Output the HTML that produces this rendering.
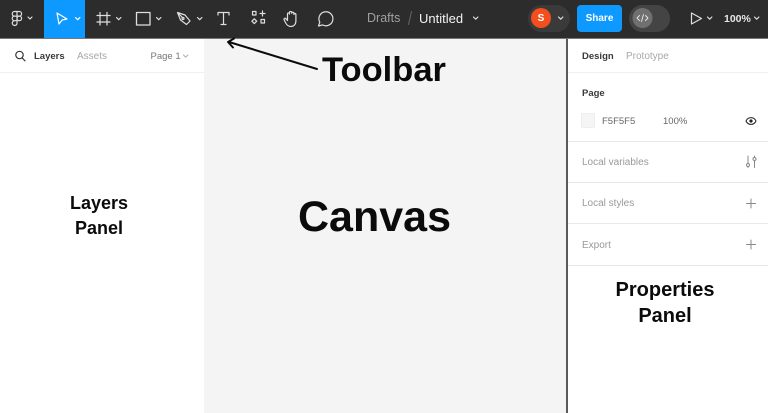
<!DOCTYPE html>
<html><head><meta charset="utf-8"><style>
html,body{margin:0;padding:0;background:#fff}
#p{position:relative;width:768px;height:413px;overflow:hidden;background:#fff;font-family:"Liberation Sans",sans-serif}
.a{position:absolute;white-space:nowrap;line-height:1}
.b{font-weight:700;color:#0b0b0b}
svg{position:absolute;left:0;top:0}
.t{font-size:9.5px;color:#3a3a3a}
.g{font-size:10px;color:#a8a8a8}
</style></head><body><div id="p">
<div class="a" style="left:0;top:0;width:768px;height:38px;background:#2c2c2c"></div>
<div class="a" style="left:0;top:38px;width:768px;height:1px;background:#777"></div>
<div class="a" style="left:44px;top:0;width:41px;height:38px;background:#0d99ff"></div>
<div class="a" style="left:204px;top:39px;width:363px;height:374px;background:#f4f4f4"></div>
<div class="a" style="left:566px;top:39px;width:2px;height:374px;background:#5a5a5a"></div>
<div class="a" style="left:0;top:72px;width:204px;height:1px;background:#efefef"></div>
<div class="a" style="left:568px;top:72px;width:200px;height:1px;background:#efefef"></div>
<div class="a" style="left:568px;top:141px;width:200px;height:1px;background:#e8e8e8"></div>
<div class="a" style="left:568px;top:182px;width:200px;height:1px;background:#e8e8e8"></div>
<div class="a" style="left:568px;top:223px;width:200px;height:1px;background:#e8e8e8"></div>
<div class="a" style="left:568px;top:265px;width:200px;height:1px;background:#e8e8e8"></div>

<svg width="768" height="413" fill="none" stroke-linecap="round" stroke-linejoin="round">
<g stroke="#dedede" stroke-width="1.200">
<path d="M17 11.500h-2.500a2.300 2.300 0 0 0 0 4.600H17zM17 11.500h2.300a2.300 2.300 0 0 1 0 4.600H17zM17 16.100h-2.500a2.300 2.300 0 0 0 0 4.600H17zM17 18.400a2.300 2.300 0 1 0 4.600 0 2.300 2.300 0 1 0-4.600 0M17 20.700v1.800a2.400 2.400 0 1 1-2.500-1.800"/>
<path d="M28 17l2 2 2-2"/>
<path d="M100 12.500v12.500M107 12.500v12.500M97 15.500h13M97 22h13"/>
<path d="M116.500 17.500l2.200 2.200 2.200-2.200"/>
<rect x="136.500" y="12.500" width="13.500" height="12.500" stroke-width="1.300"/>
<path d="M156.500 17.500l2.200 2.200 2.200-2.200"/>
<path d="M177.500 12.500l7.500 2.500 5 6-3.500 3.500-6-4.500zM177.500 12.500l5 5"/><circle cx="183" cy="18.500" r="1"/>
<path d="M197.500 17.500l2.200 2.200 2.200-2.200"/>
<path d="M218 15v-2.500h11V15M223.500 12.500v12M221 24.500h5"/>
<rect x="252.500" y="11.500" width="3.500" height="3.500"/><path d="M262.500 11v5M260 13.500h5"/><rect x="261" y="19.500" width="3.500" height="3.500"/><path d="M254.300 18.800l2.400 2.400-2.400 2.400-2.400-2.400z"/>
<path d="M291 26.500c-2.500 0-3.800-1-5-3l-1.800-3.500c-.7-1.300.8-2.300 1.800-1.200l1.500 1.700v-6.500c0-1.400 2-1.400 2 0v-1.500c0-1.400 2.200-1.400 2.200 0v.8c0-1.400 2.200-1.400 2.200 0v1.200c0-1.300 2-1.300 2 0v6.500c0 3-2 5.500-4.900 5.500z"/>
<path d="M318.500 26l1.300-3.800a7 7 0 1 1 2.700 2.700z"/>
<path d="M473.500 17l2.200 2.200 2.200-2.200"/>
<path d="M691.500 13l10 5.500-10 5.500z"/>
<path d="M707.500 17l2.200 2.200 2.200-2.200"/>
<path d="M754.500 17l2.200 2.200 2.200-2.200"/>
</g>
<path d="M57 13l10 6-4.800 1-3.200 4z" stroke="#fff" stroke-width="1.200"/>
<path d="M75.500 17.500l2.200 2.200 2.200-2.200" stroke="#fff" stroke-width="1.200"/>
<rect x="528" y="5" width="42" height="27" rx="13.500" fill="#3a3a3a"/>
<circle cx="541" cy="18" r="10" fill="#f24e1e"/>
<path d="M558.500 17l2.200 2.200 2.200-2.200" stroke="#dedede" stroke-width="1.200"/>
<rect x="629" y="5" width="41" height="27" rx="13.500" fill="#444"/>
<circle cx="642.500" cy="18" r="10" fill="#707070"/>
<path d="M639.500 15.500l-2.500 2.500 2.500 2.500M645.500 15.500l2.500 2.500-2.500 2.500M643.500 14.500l-2 7" stroke="#e8e8e8" stroke-width=".9"/>
<rect x="577" y="5" width="45" height="27" rx="4" fill="#0d99ff"/>
<path d="M408.500 24.500l3-13" stroke="#666" stroke-width="1"/>
<circle cx="19.500" cy="55" r="3.700" stroke="#333" stroke-width="1.200"/><path d="M22.300 58l2.700 2.900" stroke="#333" stroke-width="1.200"/>
<path d="M183.500 55l2.200 2.200 2.200-2.200" stroke="#aaa"/>
<rect x="581.500" y="113.500" width="13" height="14" rx="1" fill="#f5f5f5" stroke="#eee"/>
<path d="M746 121c2-4.500 8-4.500 10 0-2 4.500-8 4.500-10 0z" stroke="#222" stroke-width="1"/><circle cx="751" cy="121" r="1.600" fill="#222"/>
<g stroke="#888" stroke-width="1">
<path d="M748 156v7M748 166.500v1M754.500 156v1M754.500 160.500v7"/><circle cx="748" cy="165" r="1.500"/><circle cx="754.500" cy="159" r="1.500"/>
<path d="M746.500 203.500h9M751 199v9M746.500 244.500h9M751 240v9"/>
</g>
<path d="M317 69L229 42" stroke="#0b0b0b" stroke-width="2"/>
<path d="M234 38.500L228 42l5 5.500" stroke="#0b0b0b" stroke-width="2"/>
</svg>

<div class="a" style="left:534px;top:14px;width:14px;text-align:center;font-size:10px;font-weight:700;color:#fff">S</div>
<div class="a" style="left:577px;top:14px;width:45px;text-align:center;font-size:10px;font-weight:700;color:#fff">Share</div>
<div class="a" style="left:367px;top:12px;font-size:12.500px;color:#a0a0a0">Drafts</div>
<div class="a" style="left:419px;top:11.500px;font-size:13px;color:#f2f2f2">Untitled</div>
<div class="a" style="left:724px;top:13.500px;font-size:10.500px;font-weight:700;color:#e8e8e8">100%</div>

<div class="a t" style="left:34px;top:52px;font-weight:700">Layers</div>
<div class="a g" style="left:77px;top:52px">Assets</div>
<div class="a" style="left:150.500px;top:52px;font-size:9.500px;color:#777">Page 1</div>
<div class="a t" style="left:582px;top:52px;font-weight:700">Design</div>
<div class="a g" style="left:626px;top:52px">Prototype</div>
<div class="a t" style="left:582px;top:89px;font-weight:700">Page</div>
<div class="a" style="left:602px;top:117px;font-size:9.500px;color:#666">F5F5F5</div>
<div class="a" style="left:663px;top:117px;font-size:9.500px;color:#666">100%</div>
<div class="a" style="left:582px;top:158px;font-size:10px;color:#999">Local variables</div>
<div class="a" style="left:582px;top:199px;font-size:10px;color:#999">Local styles</div>
<div class="a" style="left:582px;top:241px;font-size:10px;color:#999">Export</div>

<div class="a b" style="left:322px;top:53px;font-size:34.500px">Toolbar</div>
<div class="a b" style="left:298px;top:196px;font-size:43px">Canvas</div>
<div class="a b" style="left:48px;top:194px;width:102px;text-align:center;font-size:18px">Layers</div>
<div class="a b" style="left:48px;top:219px;width:102px;text-align:center;font-size:18px">Panel</div>
<div class="a b" style="left:600px;top:280px;width:130px;text-align:center;font-size:20px">Properties</div>
<div class="a b" style="left:600px;top:306px;width:130px;text-align:center;font-size:20px">Panel</div>
</div></body></html>
